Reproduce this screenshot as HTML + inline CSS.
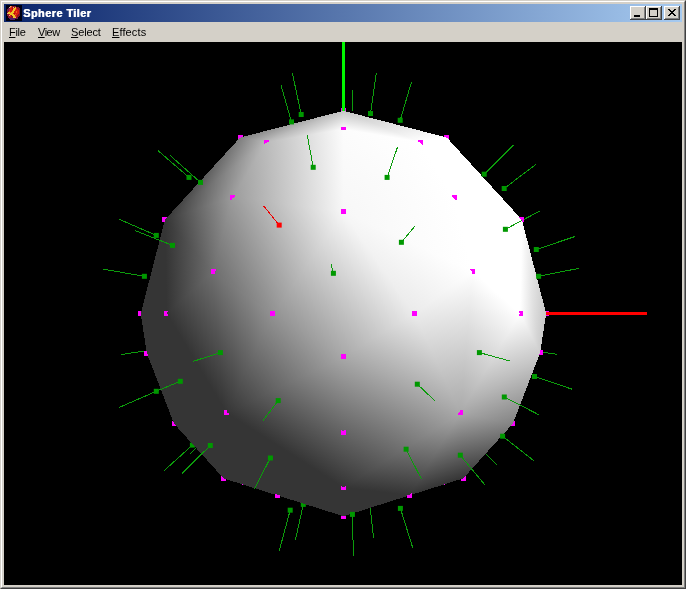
<!DOCTYPE html><html><head><meta charset="utf-8"><style>
*{margin:0;padding:0;box-sizing:border-box}
html,body{width:686px;height:589px;overflow:hidden;background:#d4d0c8;font-family:"Liberation Sans",sans-serif}
#win{position:absolute;left:0;top:0;width:686px;height:589px;background:#d4d0c8;
 border-top:1px solid #d4d0c8;border-left:1px solid #d4d0c8;border-right:1px solid #404040;border-bottom:1px solid #404040}
#win2{position:absolute;left:0;top:0;right:0;bottom:0;border-top:1px solid #fff;border-left:1px solid #fff;border-right:1px solid #808080;border-bottom:1px solid #808080}
#title{position:absolute;left:4px;top:4px;width:678px;height:18px;background:linear-gradient(to right,#0a246a,#a6caf0)}
#ttext{position:absolute;left:19px;top:3px;color:#fff;font-weight:bold;font-size:11px;line-height:12px;white-space:nowrap;letter-spacing:0.4px;will-change:transform;text-shadow:0.5px 0 0 #fff}
.btn{position:absolute;top:6px;width:16px;height:14px;background:#d4d0c8;box-shadow:inset -1px -1px #404040,inset 1px 1px #fff,inset -2px -2px #808080}
#menu{position:absolute;left:4px;top:22px;width:678px;height:20px;font-size:11px;line-height:12px;color:#000;will-change:transform}
#menu span{position:absolute;top:4px;white-space:nowrap}
#canvas{position:absolute;left:4px;top:42px;width:678px;height:543px;background:#000}
</style></head><body>
<div id="win"><div id="win2"></div></div>
<div id="title"><div id="ttext">Sphere Tiler</div></div>
<svg width="16" height="16" style="position:absolute;left:6px;top:5px" viewBox="0 0 16 16" shape-rendering="crispEdges"><path d="M0 0h1v1h-1zM1 0h1v1h-1zM2 0h1v1h-1zM3 0h1v1h-1zM4 0h1v1h-1zM5 0h1v1h-1zM6 0h1v1h-1zM7 0h1v1h-1zM8 0h1v1h-1zM9 0h1v1h-1zM10 0h1v1h-1zM11 0h1v1h-1zM12 0h1v1h-1zM13 0h1v1h-1zM14 0h1v1h-1zM15 0h1v1h-1zM0 1h1v1h-1zM1 1h1v1h-1zM2 1h1v1h-1zM3 1h1v1h-1zM10 1h1v1h-1zM11 1h1v1h-1zM12 1h1v1h-1zM13 1h1v1h-1zM14 1h1v1h-1zM15 1h1v1h-1zM0 2h1v1h-1zM1 2h1v1h-1zM2 2h1v1h-1zM13 2h1v1h-1zM14 2h1v1h-1zM15 2h1v1h-1zM0 3h1v1h-1zM1 3h1v1h-1zM14 3h1v1h-1zM15 3h1v1h-1zM0 4h1v1h-1zM14 4h1v1h-1zM15 4h1v1h-1zM0 5h1v1h-1zM14 5h1v1h-1zM15 5h1v1h-1zM0 6h1v1h-1zM14 6h1v1h-1zM15 6h1v1h-1zM0 7h1v1h-1zM14 7h1v1h-1zM15 7h1v1h-1zM0 8h1v1h-1zM14 8h1v1h-1zM15 8h1v1h-1zM0 9h1v1h-1zM14 9h1v1h-1zM15 9h1v1h-1zM0 10h1v1h-1zM14 10h1v1h-1zM15 10h1v1h-1zM0 11h1v1h-1zM1 11h1v1h-1zM13 11h1v1h-1zM14 11h1v1h-1zM15 11h1v1h-1zM0 12h1v1h-1zM1 12h1v1h-1zM12 12h1v1h-1zM13 12h1v1h-1zM14 12h1v1h-1zM15 12h1v1h-1zM0 13h1v1h-1zM1 13h1v1h-1zM2 13h1v1h-1zM12 13h1v1h-1zM13 13h1v1h-1zM14 13h1v1h-1zM15 13h1v1h-1zM0 14h1v1h-1zM1 14h1v1h-1zM2 14h1v1h-1zM3 14h1v1h-1zM9 14h1v1h-1zM10 14h1v1h-1zM11 14h1v1h-1zM12 14h1v1h-1zM13 14h1v1h-1zM14 14h1v1h-1zM15 14h1v1h-1zM0 15h1v1h-1zM1 15h1v1h-1zM2 15h1v1h-1zM3 15h1v1h-1zM4 15h1v1h-1zM5 15h1v1h-1zM6 15h1v1h-1zM7 15h1v1h-1zM8 15h1v1h-1zM9 15h1v1h-1zM10 15h1v1h-1zM11 15h1v1h-1zM12 15h1v1h-1zM13 15h1v1h-1zM14 15h1v1h-1zM15 15h1v1h-1z" fill="#000010"/><path d="M4 1h1v1h-1zM3 2h1v1h-1zM7 2h1v1h-1zM1 8h1v1h-1zM3 10h1v1h-1zM9 12h1v1h-1z" fill="#f0b090"/><path d="M5 1h1v1h-1zM4 2h1v1h-1zM7 3h1v1h-1zM9 4h1v1h-1zM6 5h1v1h-1zM3 6h1v1h-1zM10 6h1v1h-1zM4 7h1v1h-1zM10 7h1v1h-1zM9 9h1v1h-1zM9 11h1v1h-1z" fill="#f06018"/><path d="M6 1h1v1h-1zM7 1h1v1h-1zM8 1h1v1h-1zM9 1h1v1h-1zM8 2h1v1h-1zM10 2h1v1h-1zM11 2h1v1h-1zM12 2h1v1h-1zM2 3h1v1h-1zM11 3h1v1h-1zM12 3h1v1h-1zM13 3h1v1h-1zM1 4h1v1h-1zM12 4h1v1h-1zM13 4h1v1h-1zM2 5h1v1h-1zM13 5h1v1h-1zM1 6h1v1h-1zM2 6h1v1h-1zM13 6h1v1h-1zM1 7h1v1h-1zM13 7h1v1h-1zM13 8h1v1h-1zM1 9h1v1h-1zM2 9h1v1h-1zM12 9h1v1h-1zM13 9h1v1h-1zM1 10h1v1h-1zM2 10h1v1h-1zM5 10h1v1h-1zM11 10h1v1h-1zM12 10h1v1h-1zM13 10h1v1h-1zM2 11h1v1h-1zM3 11h1v1h-1zM5 11h1v1h-1zM6 11h1v1h-1zM11 11h1v1h-1zM12 11h1v1h-1zM2 12h1v1h-1zM3 12h1v1h-1zM4 12h1v1h-1zM5 12h1v1h-1zM6 12h1v1h-1zM10 12h1v1h-1zM11 12h1v1h-1zM9 13h1v1h-1zM10 13h1v1h-1z" fill="#881428"/><path d="M5 2h1v1h-1zM4 3h1v1h-1zM5 3h1v1h-1zM10 3h1v1h-1zM3 4h1v1h-1zM4 4h1v1h-1zM5 4h1v1h-1zM10 4h1v1h-1zM11 4h1v1h-1zM3 5h1v1h-1zM4 5h1v1h-1zM5 5h1v1h-1zM9 5h1v1h-1zM10 5h1v1h-1zM11 5h1v1h-1zM12 5h1v1h-1zM4 6h1v1h-1zM5 6h1v1h-1zM8 6h1v1h-1zM9 6h1v1h-1zM11 6h1v1h-1zM12 6h1v1h-1zM8 7h1v1h-1zM9 7h1v1h-1zM11 7h1v1h-1zM12 7h1v1h-1zM7 8h1v1h-1zM9 8h1v1h-1zM10 8h1v1h-1zM11 8h1v1h-1zM12 8h1v1h-1zM3 9h1v1h-1zM8 9h1v1h-1zM10 9h1v1h-1zM11 9h1v1h-1zM4 10h1v1h-1zM9 10h1v1h-1zM10 10h1v1h-1zM4 11h1v1h-1zM10 11h1v1h-1z" fill="#d81c10"/><path d="M6 2h1v1h-1zM6 3h1v1h-1zM6 4h1v1h-1zM8 8h1v1h-1z" fill="#a81410"/><path d="M9 2h1v1h-1zM8 3h1v1h-1zM9 3h1v1h-1zM7 4h1v1h-1zM8 4h1v1h-1zM7 5h1v1h-1zM8 5h1v1h-1zM6 6h1v1h-1zM7 6h1v1h-1zM2 7h1v1h-1zM3 7h1v1h-1zM5 7h1v1h-1zM6 7h1v1h-1zM7 7h1v1h-1zM2 8h1v1h-1zM3 8h1v1h-1zM4 8h1v1h-1zM5 8h1v1h-1zM6 8h1v1h-1zM4 9h1v1h-1zM5 9h1v1h-1zM6 9h1v1h-1zM7 9h1v1h-1zM6 10h1v1h-1zM7 10h1v1h-1zM8 10h1v1h-1zM7 11h1v1h-1zM8 11h1v1h-1zM7 12h1v1h-1zM8 12h1v1h-1z" fill="#f0c828"/><path d="M3 3h1v1h-1zM2 4h1v1h-1zM1 5h1v1h-1zM3 13h1v1h-1zM4 13h1v1h-1zM5 13h1v1h-1zM6 13h1v1h-1zM7 13h1v1h-1zM8 13h1v1h-1zM11 13h1v1h-1zM4 14h1v1h-1zM5 14h1v1h-1zM6 14h1v1h-1zM7 14h1v1h-1zM8 14h1v1h-1z" fill="#502068"/></svg>

<div class="btn" style="left:630px"><div style="position:absolute;left:4px;top:9px;width:6px;height:2px;background:#000"></div></div>
<div class="btn" style="left:646px"><div style="position:absolute;left:3px;top:2px;width:9px;height:9px;border:1px solid #000;border-top-width:2px"></div></div>
<div class="btn" style="left:664px"><svg width="16" height="14" style="position:absolute;left:0;top:0" shape-rendering="crispEdges"><path d="M4 3h1v1h-1zM5 3h1v1h-1zM10 3h1v1h-1zM11 3h1v1h-1zM5 4h1v1h-1zM6 4h1v1h-1zM9 4h1v1h-1zM10 4h1v1h-1zM6 5h1v1h-1zM7 5h1v1h-1zM8 5h1v1h-1zM9 5h1v1h-1zM7 6h1v1h-1zM8 6h1v1h-1zM6 7h1v1h-1zM7 7h1v1h-1zM8 7h1v1h-1zM9 7h1v1h-1zM5 8h1v1h-1zM6 8h1v1h-1zM9 8h1v1h-1zM10 8h1v1h-1zM4 9h1v1h-1zM5 9h1v1h-1zM10 9h1v1h-1zM11 9h1v1h-1z" fill="#000"/></svg></div>

<div id="menu"><span style="left:5px;letter-spacing:-0.3px"><u>F</u>ile</span><span style="left:34px;letter-spacing:-0.5px"><u>V</u>iew</span><span style="left:67px;letter-spacing:-0.15px"><u>S</u>elect</span><span style="left:108px;letter-spacing:0.12px"><u>E</u>ffects</span></div>
<div id="canvas"></div>
<svg width="686" height="589" viewBox="0 0 686 589" style="position:absolute;left:0;top:0">
<defs><clipPath id="cv"><rect x="4" y="42" width="678" height="543"/></clipPath><linearGradient id="t0" gradientUnits="userSpaceOnUse" x1="282.61" y1="325.43" x2="374.07" y2="248.00"><stop offset="0" stop-color="#929292"/><stop offset="1" stop-color="#f7f7f7"/></linearGradient>
<linearGradient id="t1" gradientUnits="userSpaceOnUse" x1="224.89" y1="411.13" x2="317.68" y2="328.02"><stop offset="0" stop-color="#353535"/><stop offset="1" stop-color="#a8a8a8"/></linearGradient>
<linearGradient id="t2" gradientUnits="userSpaceOnUse" x1="277.60" y1="444.34" x2="334.72" y2="351.39"><stop offset="0" stop-color="#353535"/><stop offset="1" stop-color="#a8a8a8"/></linearGradient>
<linearGradient id="t3" gradientUnits="userSpaceOnUse" x1="362.20" y1="441.67" x2="392.67" y2="379.69"><stop offset="0" stop-color="#646464"/><stop offset="1" stop-color="#a9a9a9"/></linearGradient>
<linearGradient id="t4" gradientUnits="userSpaceOnUse" x1="322.60" y1="333.20" x2="394.53" y2="269.64"><stop offset="0" stop-color="#a8a8a8"/><stop offset="1" stop-color="#f7f7f7"/></linearGradient>
<linearGradient id="t5" gradientUnits="userSpaceOnUse" x1="395.48" y1="382.35" x2="426.41" y2="319.49"><stop offset="0" stop-color="#a8a8a8"/><stop offset="1" stop-color="#ebebeb"/></linearGradient>
<linearGradient id="t6" gradientUnits="userSpaceOnUse" x1="222.28" y1="290.13" x2="352.22" y2="231.28"><stop offset="0" stop-color="#6f6f6f"/><stop offset="1" stop-color="#f7f7f7"/></linearGradient>
<linearGradient id="t7" gradientUnits="userSpaceOnUse" x1="195.74" y1="354.76" x2="272.79" y2="314.01"><stop offset="0" stop-color="#353535"/><stop offset="1" stop-color="#929292"/></linearGradient>
<linearGradient id="t8" gradientUnits="userSpaceOnUse" x1="184.64" y1="343.27" x2="237.79" y2="311.32"><stop offset="0" stop-color="#353535"/><stop offset="1" stop-color="#6f6f6f"/></linearGradient>
<linearGradient id="t9" gradientUnits="userSpaceOnUse" x1="165.90" y1="268.51" x2="213.72" y2="267.61"><stop offset="0" stop-color="#353535"/><stop offset="1" stop-color="#6f6f6f"/></linearGradient>
<linearGradient id="t10" gradientUnits="userSpaceOnUse" x1="205.35" y1="252.04" x2="336.09" y2="195.04"><stop offset="0" stop-color="#6f6f6f"/><stop offset="1" stop-color="#f7f7f7"/></linearGradient>
<linearGradient id="t11" gradientUnits="userSpaceOnUse" x1="167.49" y1="235.29" x2="237.09" y2="224.06"><stop offset="0" stop-color="#353535"/><stop offset="1" stop-color="#9c9c9c"/></linearGradient>
<linearGradient id="t12" gradientUnits="userSpaceOnUse" x1="388.79" y1="295.03" x2="429.08" y2="239.52"><stop offset="0" stop-color="#ebebeb"/><stop offset="1" stop-color="#ffffff"/></linearGradient>
<linearGradient id="t13" gradientUnits="userSpaceOnUse" x1="462.75" y1="412.52" x2="439.71" y2="277.04"><stop offset="0" stop-color="#a9a9a9"/><stop offset="1" stop-color="#ffffff"/></linearGradient>
<linearGradient id="t14" gradientUnits="userSpaceOnUse" x1="433.79" y1="389.25" x2="509.77" y2="304.28"><stop offset="0" stop-color="#a9a9a9"/><stop offset="1" stop-color="#ffffff"/></linearGradient>
<linearGradient id="t16" gradientUnits="userSpaceOnUse" x1="351.87" y1="245.03" x2="459.25" y2="217.62"><stop offset="0" stop-color="#f7f7f7"/><stop offset="1" stop-color="#ffffff"/></linearGradient>
<linearGradient id="t18" gradientUnits="userSpaceOnUse" x1="334.00" y1="204.12" x2="398.71" y2="124.55"><stop offset="0" stop-color="#f7f7f7"/><stop offset="1" stop-color="#ffffff"/></linearGradient>
<linearGradient id="t19" gradientUnits="userSpaceOnUse" x1="370.96" y1="115.04" x2="368.03" y2="134.07"><stop offset="0" stop-color="#c6c6c6"/><stop offset="1" stop-color="#ffffff"/></linearGradient>
<linearGradient id="t20" gradientUnits="userSpaceOnUse" x1="398.55" y1="101.28" x2="406.03" y2="144.61"><stop offset="0" stop-color="#c6c6c6"/><stop offset="1" stop-color="#ffffff"/></linearGradient>
<linearGradient id="t22" gradientUnits="userSpaceOnUse" x1="347.93" y1="219.19" x2="434.90" y2="165.92"><stop offset="0" stop-color="#f7f7f7"/><stop offset="1" stop-color="#ffffff"/></linearGradient>
<linearGradient id="t24" gradientUnits="userSpaceOnUse" x1="268.11" y1="164.67" x2="345.57" y2="159.02"><stop offset="0" stop-color="#bbbbbb"/><stop offset="1" stop-color="#fcfcfc"/></linearGradient>
<linearGradient id="t25" gradientUnits="userSpaceOnUse" x1="314.58" y1="120.37" x2="322.82" y2="138.56"><stop offset="0" stop-color="#bbbbbb"/><stop offset="1" stop-color="#fcfcfc"/></linearGradient>
<linearGradient id="t26" gradientUnits="userSpaceOnUse" x1="278.93" y1="120.32" x2="286.01" y2="136.28"><stop offset="0" stop-color="#7f7f7f"/><stop offset="1" stop-color="#c6c6c6"/></linearGradient>
<linearGradient id="t27" gradientUnits="userSpaceOnUse" x1="197.00" y1="153.51" x2="248.84" y2="178.59"><stop offset="0" stop-color="#353535"/><stop offset="1" stop-color="#bbbbbb"/></linearGradient>
<linearGradient id="t28" gradientUnits="userSpaceOnUse" x1="232.05" y1="187.09" x2="341.12" y2="179.49"><stop offset="0" stop-color="#9c9c9c"/><stop offset="1" stop-color="#f7f7f7"/></linearGradient>
<linearGradient id="t29" gradientUnits="userSpaceOnUse" x1="177.49" y1="174.26" x2="251.98" y2="194.77"><stop offset="0" stop-color="#353535"/><stop offset="1" stop-color="#bbbbbb"/></linearGradient>
<linearGradient id="t30" gradientUnits="userSpaceOnUse" x1="296.12" y1="457.33" x2="321.08" y2="418.19"><stop offset="0" stop-color="#353535"/><stop offset="1" stop-color="#646464"/></linearGradient>
<linearGradient id="t31" gradientUnits="userSpaceOnUse" x1="356.13" y1="494.17" x2="412.14" y2="387.63"><stop offset="0" stop-color="#353535"/><stop offset="1" stop-color="#a9a9a9"/></linearGradient>
<linearGradient id="t32" gradientUnits="userSpaceOnUse" x1="400.92" y1="494.37" x2="411.37" y2="407.08"><stop offset="0" stop-color="#353535"/><stop offset="1" stop-color="#a9a9a9"/></linearGradient>
<linearGradient id="t43" gradientUnits="userSpaceOnUse" x1="514.45" y1="423.02" x2="494.47" y2="370.28"><stop offset="0" stop-color="#848484"/><stop offset="1" stop-color="#cdcdcd"/></linearGradient>
<linearGradient id="t44" gradientUnits="userSpaceOnUse" x1="547.20" y1="296.05" x2="517.48" y2="294.30"><stop offset="0" stop-color="#c6c6c6"/><stop offset="1" stop-color="#ffffff"/></linearGradient>
<linearGradient id="t45" gradientUnits="userSpaceOnUse" x1="518.13" y1="393.49" x2="494.17" y2="322.20"><stop offset="0" stop-color="#a9a9a9"/><stop offset="1" stop-color="#ffffff"/></linearGradient>
<linearGradient id="t46" gradientUnits="userSpaceOnUse" x1="541.19" y1="295.66" x2="520.42" y2="295.25"><stop offset="0" stop-color="#cdcdcd"/><stop offset="1" stop-color="#ffffff"/></linearGradient>
<linearGradient id="t47" gradientUnits="userSpaceOnUse" x1="485.81" y1="473.94" x2="473.29" y2="410.37"><stop offset="0" stop-color="#353535"/><stop offset="1" stop-color="#a9a9a9"/></linearGradient>
<linearGradient id="t48" gradientUnits="userSpaceOnUse" x1="450.70" y1="482.35" x2="431.60" y2="422.02"><stop offset="0" stop-color="#353535"/><stop offset="1" stop-color="#a9a9a9"/></linearGradient></defs>
<g clip-path="url(#cv)">
<line x1="352.4" y1="111.4" x2="352.4" y2="89.9" stroke="#0c9c0c" stroke-width="1" shape-rendering="crispEdges"/>
<line x1="145" y1="351" x2="121.4" y2="354.5" stroke="#0c9c0c" stroke-width="1" shape-rendering="crispEdges"/>
<line x1="192.4" y1="445.1" x2="164.1" y2="470.7" stroke="#0c9c0c" stroke-width="1" shape-rendering="crispEdges"/>
<rect x="189.9" y="442.6" width="5" height="5" fill="#009800"/>
<line x1="190.3" y1="453.8" x2="196.2" y2="448" stroke="#0c9c0c" stroke-width="1" shape-rendering="crispEdges"/>
<line x1="303.3" y1="504.4" x2="295.4" y2="539.9" stroke="#0c9c0c" stroke-width="1" shape-rendering="crispEdges"/>
<rect x="300.8" y="501.9" width="5" height="5" fill="#009800"/>
<line x1="370.2" y1="508.4" x2="373.6" y2="538" stroke="#0c9c0c" stroke-width="1" shape-rendering="crispEdges"/>
<line x1="485.6" y1="453.5" x2="496.7" y2="464.5" stroke="#0c9c0c" stroke-width="1" shape-rendering="crispEdges"/>
<line x1="540" y1="352" x2="556.6" y2="354.2" stroke="#0c9c0c" stroke-width="1" shape-rendering="crispEdges"/>
<g shape-rendering="crispEdges"><polygon points="343.37,211.74 272.52,313.50 343.37,356.70" fill="url(#t0)"/>
<polygon points="226.52,412.95 272.52,313.50 343.37,356.70" fill="url(#t1)"/>
<polygon points="226.52,412.95 343.39,432.42 343.37,356.70" fill="url(#t2)"/>
<polygon points="460.29,412.94 343.39,432.42 343.37,356.70" fill="url(#t3)"/>
<polygon points="343.37,211.74 414.23,313.49 343.37,356.70" fill="url(#t4)"/>
<polygon points="460.29,412.94 414.23,313.49 343.37,356.70" fill="url(#t5)"/>
<polygon points="343.37,211.74 272.52,313.50 213.80,271.40" fill="url(#t6)"/>
<polygon points="226.52,412.95 272.52,313.50 213.80,271.40" fill="url(#t7)"/>
<polygon points="226.52,412.95 166.75,313.52 213.80,271.40" fill="url(#t8)"/>
<polygon points="164.98,219.71 166.75,313.52 213.80,271.40" fill="url(#t9)"/>
<polygon points="343.37,211.74 232.75,197.17 213.80,271.40" fill="url(#t10)"/>
<polygon points="164.98,219.71 232.75,197.17 213.80,271.40" fill="url(#t11)"/>
<polygon points="343.37,211.74 414.23,313.49 472.98,271.38" fill="url(#t12)"/>
<polygon points="460.29,412.94 414.23,313.49 472.98,271.38" fill="url(#t13)"/>
<polygon points="460.29,412.94 520.07,313.50 472.98,271.38" fill="url(#t14)"/>
<polygon points="521.88,219.67 520.07,313.50 472.98,271.38" fill="#ffffff"/>
<polygon points="343.37,211.74 454.03,197.15 472.98,271.38" fill="url(#t16)"/>
<polygon points="521.88,219.67 454.03,197.15 472.98,271.38" fill="#ffffff"/>
<polygon points="343.37,211.74 343.40,129.25 420.34,142.14" fill="url(#t18)"/>
<polygon points="343.43,110.79 343.40,129.25 420.34,142.14" fill="url(#t19)"/>
<polygon points="343.43,110.79 446.83,137.57 420.34,142.14" fill="url(#t20)"/>
<polygon points="521.88,219.67 446.83,137.57 420.34,142.14" fill="#ffffff"/>
<polygon points="343.37,211.74 454.03,197.15 420.34,142.14" fill="url(#t22)"/>
<polygon points="521.88,219.67 454.03,197.15 420.34,142.14" fill="#ffffff"/>
<polygon points="343.37,211.74 343.40,129.25 266.46,142.16" fill="url(#t24)"/>
<polygon points="343.43,110.79 343.40,129.25 266.46,142.16" fill="url(#t25)"/>
<polygon points="343.43,110.79 240.02,137.59 266.46,142.16" fill="url(#t26)"/>
<polygon points="164.98,219.71 240.02,137.59 266.46,142.16" fill="url(#t27)"/>
<polygon points="343.37,211.74 232.75,197.17 266.46,142.16" fill="url(#t28)"/>
<polygon points="164.98,219.71 232.75,197.17 266.46,142.16" fill="url(#t29)"/>
<polygon points="226.52,412.95 343.39,432.42 343.41,487.49" fill="url(#t30)"/>
<polygon points="460.29,412.94 343.39,432.42 343.41,487.49" fill="url(#t31)"/>
<polygon points="460.29,412.94 409.50,495.40 343.41,487.49" fill="url(#t32)"/>
<polygon points="343.46,516.26 409.50,495.40 343.41,487.49" fill="#353535"/>
<polygon points="226.52,412.95 277.36,495.40 343.41,487.49" fill="#353535"/>
<polygon points="343.46,516.26 277.36,495.40 343.41,487.49" fill="#353535"/>
<polygon points="226.52,412.95 174.01,423.64 146.79,353.02" fill="#353535"/>
<polygon points="164.98,219.71 140.74,313.54 146.79,353.02" fill="#353535"/>
<polygon points="226.52,412.95 166.75,313.52 146.79,353.02" fill="#353535"/>
<polygon points="164.98,219.71 166.75,313.52 146.79,353.02" fill="#353535"/>
<polygon points="226.52,412.95 174.01,423.64 223.67,478.40" fill="#353535"/>
<polygon points="226.52,412.95 277.36,495.40 223.67,478.40" fill="#353535"/>
<polygon points="343.46,516.26 277.36,495.40 223.67,478.40" fill="#353535"/>
<polygon points="460.29,412.94 512.87,423.62 540.08,353.00" fill="url(#t43)"/>
<polygon points="521.88,219.67 546.17,313.51 540.08,353.00" fill="url(#t44)"/>
<polygon points="460.29,412.94 520.07,313.50 540.08,353.00" fill="url(#t45)"/>
<polygon points="521.88,219.67 520.07,313.50 540.08,353.00" fill="url(#t46)"/>
<polygon points="460.29,412.94 512.87,423.62 463.23,478.39" fill="url(#t47)"/>
<polygon points="460.29,412.94 409.50,495.40 463.23,478.39" fill="url(#t48)"/>
<polygon points="343.46,516.26 409.50,495.40 463.23,478.39" fill="#353535"/></g>
<line x1="291.5" y1="121.9" x2="281" y2="85" stroke="#0c9c0c" stroke-width="1" shape-rendering="crispEdges"/>
<line x1="301.2" y1="114.5" x2="292.3" y2="72.8" stroke="#0c9c0c" stroke-width="1" shape-rendering="crispEdges"/>
<line x1="370.5" y1="113.5" x2="376.3" y2="72.8" stroke="#0c9c0c" stroke-width="1" shape-rendering="crispEdges"/>
<line x1="400.2" y1="120.3" x2="411.4" y2="82.3" stroke="#0c9c0c" stroke-width="1" shape-rendering="crispEdges"/>
<line x1="313.2" y1="167.3" x2="307.3" y2="135.2" stroke="#0c9c0c" stroke-width="1" shape-rendering="crispEdges"/>
<line x1="387.1" y1="177.4" x2="397.4" y2="147.4" stroke="#0c9c0c" stroke-width="1" shape-rendering="crispEdges"/>
<line x1="401.4" y1="242.3" x2="415" y2="226.1" stroke="#0c9c0c" stroke-width="1" shape-rendering="crispEdges"/>
<line x1="333.4" y1="273.3" x2="331" y2="264.3" stroke="#0c9c0c" stroke-width="1" shape-rendering="crispEdges"/>
<line x1="484.2" y1="174.2" x2="513.7" y2="145" stroke="#0c9c0c" stroke-width="1" shape-rendering="crispEdges"/>
<line x1="504.2" y1="188.5" x2="535.8" y2="164.4" stroke="#0c9c0c" stroke-width="1" shape-rendering="crispEdges"/>
<line x1="505.4" y1="229.3" x2="539.8" y2="211" stroke="#0c9c0c" stroke-width="1" shape-rendering="crispEdges"/>
<line x1="536.3" y1="249.5" x2="575" y2="236.5" stroke="#0c9c0c" stroke-width="1" shape-rendering="crispEdges"/>
<line x1="189" y1="177.4" x2="157.8" y2="150.5" stroke="#0c9c0c" stroke-width="1" shape-rendering="crispEdges"/>
<line x1="200.5" y1="182.4" x2="170" y2="155.3" stroke="#0c9c0c" stroke-width="1" shape-rendering="crispEdges"/>
<line x1="156.3" y1="235.4" x2="119" y2="219.2" stroke="#0c9c0c" stroke-width="1" shape-rendering="crispEdges"/>
<line x1="172.5" y1="245.4" x2="135.2" y2="230.6" stroke="#0c9c0c" stroke-width="1" shape-rendering="crispEdges"/>
<line x1="144.4" y1="276.3" x2="102.9" y2="269.1" stroke="#0c9c0c" stroke-width="1" shape-rendering="crispEdges"/>
<line x1="220.4" y1="352.6" x2="193.1" y2="361.4" stroke="#0c9c0c" stroke-width="1" shape-rendering="crispEdges"/>
<line x1="180.3" y1="381.3" x2="156.3" y2="391.3" stroke="#0c9c0c" stroke-width="1" shape-rendering="crispEdges"/>
<line x1="156.3" y1="391.3" x2="119" y2="407.5" stroke="#0c9c0c" stroke-width="1" shape-rendering="crispEdges"/>
<line x1="278.2" y1="400.6" x2="263.2" y2="420.3" stroke="#0c9c0c" stroke-width="1" shape-rendering="crispEdges"/>
<line x1="210.3" y1="445.5" x2="181.9" y2="473.6" stroke="#0c9c0c" stroke-width="1" shape-rendering="crispEdges"/>
<line x1="270.4" y1="458" x2="254.3" y2="489" stroke="#0c9c0c" stroke-width="1" shape-rendering="crispEdges"/>
<line x1="290.2" y1="510.2" x2="279.2" y2="550.9" stroke="#0c9c0c" stroke-width="1" shape-rendering="crispEdges"/>
<line x1="352.4" y1="514.4" x2="353.4" y2="555.6" stroke="#0c9c0c" stroke-width="1" shape-rendering="crispEdges"/>
<line x1="406.1" y1="449.2" x2="421.6" y2="479.4" stroke="#0c9c0c" stroke-width="1" shape-rendering="crispEdges"/>
<line x1="460.3" y1="455.2" x2="485.3" y2="485.4" stroke="#0c9c0c" stroke-width="1" shape-rendering="crispEdges"/>
<line x1="502.6" y1="436.2" x2="533.7" y2="460.6" stroke="#0c9c0c" stroke-width="1" shape-rendering="crispEdges"/>
<line x1="400.4" y1="508.4" x2="412.7" y2="547.7" stroke="#0c9c0c" stroke-width="1" shape-rendering="crispEdges"/>
<line x1="534.5" y1="376.5" x2="571.8" y2="389.1" stroke="#0c9c0c" stroke-width="1" shape-rendering="crispEdges"/>
<line x1="504.3" y1="397" x2="538.5" y2="414.6" stroke="#0c9c0c" stroke-width="1" shape-rendering="crispEdges"/>
<line x1="479.4" y1="352.6" x2="509.5" y2="360.9" stroke="#0c9c0c" stroke-width="1" shape-rendering="crispEdges"/>
<line x1="417.3" y1="384.2" x2="434.7" y2="400.6" stroke="#0c9c0c" stroke-width="1" shape-rendering="crispEdges"/>
<line x1="538.6" y1="276.3" x2="578.7" y2="268.4" stroke="#0c9c0c" stroke-width="1" shape-rendering="crispEdges"/>
<path d="M341 209h1v1h-1zM342 209h1v1h-1zM343 209h1v1h-1zM344 209h1v1h-1zM345 209h1v1h-1zM341 210h1v1h-1zM342 210h1v1h-1zM343 210h1v1h-1zM344 210h1v1h-1zM345 210h1v1h-1zM341 211h1v1h-1zM342 211h1v1h-1zM343 211h1v1h-1zM344 211h1v1h-1zM345 211h1v1h-1zM341 212h1v1h-1zM342 212h1v1h-1zM343 212h1v1h-1zM344 212h1v1h-1zM345 212h1v1h-1zM341 213h1v1h-1zM342 213h1v1h-1zM343 213h1v1h-1zM344 213h1v1h-1zM345 213h1v1h-1zM224 410h1v1h-1zM225 410h1v1h-1zM226 410h1v1h-1zM224 411h1v1h-1zM225 411h1v1h-1zM226 411h1v1h-1zM224 412h1v1h-1zM225 412h1v1h-1zM226 412h1v1h-1zM224 413h1v1h-1zM225 413h1v1h-1zM226 413h1v1h-1zM227 413h1v1h-1zM228 413h1v1h-1zM224 414h1v1h-1zM225 414h1v1h-1zM226 414h1v1h-1zM227 414h1v1h-1zM228 414h1v1h-1zM460 410h1v1h-1zM461 410h1v1h-1zM462 410h1v1h-1zM460 411h1v1h-1zM461 411h1v1h-1zM462 411h1v1h-1zM459 412h1v1h-1zM460 412h1v1h-1zM461 412h1v1h-1zM462 412h1v1h-1zM458 413h1v1h-1zM459 413h1v1h-1zM460 413h1v1h-1zM461 413h1v1h-1zM462 413h1v1h-1zM458 414h1v1h-1zM459 414h1v1h-1zM460 414h1v1h-1zM461 414h1v1h-1zM462 414h1v1h-1zM341 108h1v1h-1zM342 108h1v1h-1zM343 108h1v1h-1zM344 108h1v1h-1zM345 108h1v1h-1zM341 109h1v1h-1zM342 109h1v1h-1zM343 109h1v1h-1zM344 109h1v1h-1zM345 109h1v1h-1zM341 110h1v1h-1zM342 110h1v1h-1zM343 110h1v1h-1zM344 110h1v1h-1zM345 110h1v1h-1zM519 217h1v1h-1zM520 217h1v1h-1zM521 217h1v1h-1zM522 217h1v1h-1zM523 217h1v1h-1zM520 218h1v1h-1zM521 218h1v1h-1zM522 218h1v1h-1zM523 218h1v1h-1zM521 219h1v1h-1zM522 219h1v1h-1zM523 219h1v1h-1zM522 220h1v1h-1zM523 220h1v1h-1zM522 221h1v1h-1zM523 221h1v1h-1zM162 217h1v1h-1zM163 217h1v1h-1zM164 217h1v1h-1zM165 217h1v1h-1zM166 217h1v1h-1zM162 218h1v1h-1zM163 218h1v1h-1zM164 218h1v1h-1zM165 218h1v1h-1zM162 219h1v1h-1zM163 219h1v1h-1zM164 219h1v1h-1zM162 220h1v1h-1zM163 220h1v1h-1zM164 220h1v1h-1zM162 221h1v1h-1zM163 221h1v1h-1zM164 221h1v1h-1zM341 516h1v1h-1zM342 516h1v1h-1zM343 516h1v1h-1zM344 516h1v1h-1zM345 516h1v1h-1zM341 517h1v1h-1zM342 517h1v1h-1zM343 517h1v1h-1zM344 517h1v1h-1zM345 517h1v1h-1zM341 518h1v1h-1zM342 518h1v1h-1zM343 518h1v1h-1zM344 518h1v1h-1zM345 518h1v1h-1zM270 311h1v1h-1zM271 311h1v1h-1zM272 311h1v1h-1zM273 311h1v1h-1zM274 311h1v1h-1zM270 312h1v1h-1zM271 312h1v1h-1zM272 312h1v1h-1zM273 312h1v1h-1zM274 312h1v1h-1zM270 313h1v1h-1zM271 313h1v1h-1zM272 313h1v1h-1zM273 313h1v1h-1zM274 313h1v1h-1zM270 314h1v1h-1zM271 314h1v1h-1zM272 314h1v1h-1zM273 314h1v1h-1zM274 314h1v1h-1zM270 315h1v1h-1zM271 315h1v1h-1zM272 315h1v1h-1zM273 315h1v1h-1zM274 315h1v1h-1zM412 311h1v1h-1zM413 311h1v1h-1zM414 311h1v1h-1zM415 311h1v1h-1zM416 311h1v1h-1zM412 312h1v1h-1zM413 312h1v1h-1zM414 312h1v1h-1zM415 312h1v1h-1zM416 312h1v1h-1zM412 313h1v1h-1zM413 313h1v1h-1zM414 313h1v1h-1zM415 313h1v1h-1zM416 313h1v1h-1zM412 314h1v1h-1zM413 314h1v1h-1zM414 314h1v1h-1zM415 314h1v1h-1zM416 314h1v1h-1zM412 315h1v1h-1zM413 315h1v1h-1zM414 315h1v1h-1zM415 315h1v1h-1zM416 315h1v1h-1zM341 127h1v1h-1zM342 127h1v1h-1zM343 127h1v1h-1zM344 127h1v1h-1zM345 127h1v1h-1zM341 128h1v1h-1zM342 128h1v1h-1zM343 128h1v1h-1zM344 128h1v1h-1zM345 128h1v1h-1zM341 129h1v1h-1zM342 129h1v1h-1zM343 129h1v1h-1zM344 129h1v1h-1zM345 129h1v1h-1zM452 195h1v1h-1zM453 195h1v1h-1zM454 195h1v1h-1zM455 195h1v1h-1zM456 195h1v1h-1zM452 196h1v1h-1zM453 196h1v1h-1zM454 196h1v1h-1zM455 196h1v1h-1zM456 196h1v1h-1zM453 197h1v1h-1zM454 197h1v1h-1zM455 197h1v1h-1zM456 197h1v1h-1zM454 198h1v1h-1zM455 198h1v1h-1zM456 198h1v1h-1zM455 199h1v1h-1zM456 199h1v1h-1zM230 195h1v1h-1zM231 195h1v1h-1zM232 195h1v1h-1zM233 195h1v1h-1zM234 195h1v1h-1zM230 196h1v1h-1zM231 196h1v1h-1zM232 196h1v1h-1zM233 196h1v1h-1zM234 196h1v1h-1zM230 197h1v1h-1zM231 197h1v1h-1zM232 197h1v1h-1zM233 197h1v1h-1zM230 198h1v1h-1zM231 198h1v1h-1zM230 199h1v1h-1zM231 199h1v1h-1zM341 430h1v1h-1zM344 430h1v1h-1zM345 430h1v1h-1zM341 431h1v1h-1zM342 431h1v1h-1zM343 431h1v1h-1zM344 431h1v1h-1zM345 431h1v1h-1zM341 432h1v1h-1zM342 432h1v1h-1zM343 432h1v1h-1zM344 432h1v1h-1zM345 432h1v1h-1zM341 433h1v1h-1zM342 433h1v1h-1zM343 433h1v1h-1zM344 433h1v1h-1zM345 433h1v1h-1zM341 434h1v1h-1zM342 434h1v1h-1zM343 434h1v1h-1zM344 434h1v1h-1zM345 434h1v1h-1zM172 421h1v1h-1zM172 422h1v1h-1zM173 422h1v1h-1zM172 423h1v1h-1zM173 423h1v1h-1zM172 424h1v1h-1zM173 424h1v1h-1zM174 424h1v1h-1zM172 425h1v1h-1zM173 425h1v1h-1zM174 425h1v1h-1zM175 425h1v1h-1zM164 311h1v1h-1zM165 311h1v1h-1zM166 311h1v1h-1zM167 311h1v1h-1zM164 312h1v1h-1zM165 312h1v1h-1zM166 312h1v1h-1zM164 313h1v1h-1zM165 313h1v1h-1zM166 313h1v1h-1zM164 314h1v1h-1zM165 314h1v1h-1zM166 314h1v1h-1zM167 314h1v1h-1zM164 315h1v1h-1zM165 315h1v1h-1zM166 315h1v1h-1zM167 315h1v1h-1zM275 494h1v1h-1zM276 494h1v1h-1zM275 495h1v1h-1zM276 495h1v1h-1zM277 495h1v1h-1zM278 495h1v1h-1zM279 495h1v1h-1zM275 496h1v1h-1zM276 496h1v1h-1zM277 496h1v1h-1zM278 496h1v1h-1zM279 496h1v1h-1zM275 497h1v1h-1zM276 497h1v1h-1zM277 497h1v1h-1zM278 497h1v1h-1zM279 497h1v1h-1zM514 421h1v1h-1zM513 422h1v1h-1zM514 422h1v1h-1zM513 423h1v1h-1zM514 423h1v1h-1zM512 424h1v1h-1zM513 424h1v1h-1zM514 424h1v1h-1zM511 425h1v1h-1zM512 425h1v1h-1zM513 425h1v1h-1zM514 425h1v1h-1zM519 311h1v1h-1zM520 311h1v1h-1zM521 311h1v1h-1zM522 311h1v1h-1zM519 312h1v1h-1zM520 312h1v1h-1zM521 312h1v1h-1zM522 312h1v1h-1zM520 313h1v1h-1zM521 313h1v1h-1zM522 313h1v1h-1zM519 314h1v1h-1zM520 314h1v1h-1zM521 314h1v1h-1zM522 314h1v1h-1zM519 315h1v1h-1zM520 315h1v1h-1zM521 315h1v1h-1zM522 315h1v1h-1zM411 493h1v1h-1zM410 494h1v1h-1zM411 494h1v1h-1zM407 495h1v1h-1zM408 495h1v1h-1zM409 495h1v1h-1zM410 495h1v1h-1zM411 495h1v1h-1zM407 496h1v1h-1zM408 496h1v1h-1zM409 496h1v1h-1zM410 496h1v1h-1zM411 496h1v1h-1zM407 497h1v1h-1zM408 497h1v1h-1zM409 497h1v1h-1zM410 497h1v1h-1zM411 497h1v1h-1zM138 311h1v1h-1zM139 311h1v1h-1zM140 311h1v1h-1zM138 312h1v1h-1zM139 312h1v1h-1zM140 312h1v1h-1zM138 313h1v1h-1zM139 313h1v1h-1zM140 313h1v1h-1zM138 314h1v1h-1zM139 314h1v1h-1zM140 314h1v1h-1zM138 315h1v1h-1zM139 315h1v1h-1zM140 315h1v1h-1zM242 484h1v1h-1zM546 311h1v1h-1zM547 311h1v1h-1zM548 311h1v1h-1zM546 312h1v1h-1zM547 312h1v1h-1zM548 312h1v1h-1zM546 313h1v1h-1zM547 313h1v1h-1zM548 313h1v1h-1zM546 314h1v1h-1zM547 314h1v1h-1zM548 314h1v1h-1zM546 315h1v1h-1zM547 315h1v1h-1zM548 315h1v1h-1zM444 484h1v1h-1zM444 135h1v1h-1zM445 135h1v1h-1zM446 135h1v1h-1zM447 135h1v1h-1zM448 135h1v1h-1zM444 136h1v1h-1zM445 136h1v1h-1zM446 136h1v1h-1zM447 136h1v1h-1zM448 136h1v1h-1zM446 137h1v1h-1zM447 137h1v1h-1zM448 137h1v1h-1zM448 138h1v1h-1zM238 135h1v1h-1zM239 135h1v1h-1zM240 135h1v1h-1zM241 135h1v1h-1zM242 135h1v1h-1zM238 136h1v1h-1zM239 136h1v1h-1zM240 136h1v1h-1zM241 136h1v1h-1zM242 136h1v1h-1zM238 137h1v1h-1zM239 137h1v1h-1zM240 137h1v1h-1zM238 138h1v1h-1zM341 354h1v1h-1zM342 354h1v1h-1zM343 354h1v1h-1zM344 354h1v1h-1zM345 354h1v1h-1zM341 355h1v1h-1zM342 355h1v1h-1zM343 355h1v1h-1zM344 355h1v1h-1zM345 355h1v1h-1zM341 356h1v1h-1zM342 356h1v1h-1zM343 356h1v1h-1zM344 356h1v1h-1zM345 356h1v1h-1zM341 357h1v1h-1zM342 357h1v1h-1zM343 357h1v1h-1zM344 357h1v1h-1zM345 357h1v1h-1zM341 358h1v1h-1zM342 358h1v1h-1zM343 358h1v1h-1zM344 358h1v1h-1zM345 358h1v1h-1zM211 269h1v1h-1zM212 269h1v1h-1zM213 269h1v1h-1zM214 269h1v1h-1zM215 269h1v1h-1zM211 270h1v1h-1zM212 270h1v1h-1zM213 270h1v1h-1zM214 270h1v1h-1zM215 270h1v1h-1zM211 271h1v1h-1zM212 271h1v1h-1zM213 271h1v1h-1zM214 271h1v1h-1zM211 272h1v1h-1zM212 272h1v1h-1zM213 272h1v1h-1zM214 272h1v1h-1zM211 273h1v1h-1zM212 273h1v1h-1zM213 273h1v1h-1zM214 273h1v1h-1zM470 269h1v1h-1zM471 269h1v1h-1zM472 269h1v1h-1zM473 269h1v1h-1zM474 269h1v1h-1zM471 270h1v1h-1zM472 270h1v1h-1zM473 270h1v1h-1zM474 270h1v1h-1zM472 271h1v1h-1zM473 271h1v1h-1zM474 271h1v1h-1zM472 272h1v1h-1zM473 272h1v1h-1zM474 272h1v1h-1zM472 273h1v1h-1zM473 273h1v1h-1zM474 273h1v1h-1zM418 140h1v1h-1zM419 140h1v1h-1zM420 140h1v1h-1zM421 140h1v1h-1zM422 140h1v1h-1zM418 141h1v1h-1zM419 141h1v1h-1zM420 141h1v1h-1zM421 141h1v1h-1zM422 141h1v1h-1zM420 142h1v1h-1zM421 142h1v1h-1zM422 142h1v1h-1zM421 143h1v1h-1zM422 143h1v1h-1zM422 144h1v1h-1zM264 140h1v1h-1zM265 140h1v1h-1zM266 140h1v1h-1zM267 140h1v1h-1zM268 140h1v1h-1zM264 141h1v1h-1zM265 141h1v1h-1zM266 141h1v1h-1zM267 141h1v1h-1zM268 141h1v1h-1zM264 142h1v1h-1zM265 142h1v1h-1zM266 142h1v1h-1zM264 143h1v1h-1zM341 486h1v1h-1zM345 486h1v1h-1zM341 487h1v1h-1zM342 487h1v1h-1zM343 487h1v1h-1zM344 487h1v1h-1zM345 487h1v1h-1zM341 488h1v1h-1zM342 488h1v1h-1zM343 488h1v1h-1zM344 488h1v1h-1zM345 488h1v1h-1zM341 489h1v1h-1zM342 489h1v1h-1zM343 489h1v1h-1zM344 489h1v1h-1zM345 489h1v1h-1zM144 351h1v1h-1zM145 351h1v1h-1zM146 351h1v1h-1zM144 352h1v1h-1zM145 352h1v1h-1zM146 352h1v1h-1zM144 353h1v1h-1zM145 353h1v1h-1zM146 353h1v1h-1zM144 354h1v1h-1zM145 354h1v1h-1zM146 354h1v1h-1zM147 354h1v1h-1zM144 355h1v1h-1zM145 355h1v1h-1zM146 355h1v1h-1zM147 355h1v1h-1zM221 476h1v1h-1zM221 477h1v1h-1zM222 477h1v1h-1zM221 478h1v1h-1zM222 478h1v1h-1zM223 478h1v1h-1zM221 479h1v1h-1zM222 479h1v1h-1zM223 479h1v1h-1zM224 479h1v1h-1zM225 479h1v1h-1zM221 480h1v1h-1zM222 480h1v1h-1zM223 480h1v1h-1zM224 480h1v1h-1zM225 480h1v1h-1zM540 350h1v1h-1zM541 350h1v1h-1zM542 350h1v1h-1zM540 351h1v1h-1zM541 351h1v1h-1zM542 351h1v1h-1zM540 352h1v1h-1zM541 352h1v1h-1zM542 352h1v1h-1zM540 353h1v1h-1zM541 353h1v1h-1zM542 353h1v1h-1zM539 354h1v1h-1zM540 354h1v1h-1zM541 354h1v1h-1zM542 354h1v1h-1zM465 476h1v1h-1zM464 477h1v1h-1zM465 477h1v1h-1zM463 478h1v1h-1zM464 478h1v1h-1zM465 478h1v1h-1zM461 479h1v1h-1zM462 479h1v1h-1zM463 479h1v1h-1zM464 479h1v1h-1zM465 479h1v1h-1zM461 480h1v1h-1zM462 480h1v1h-1zM463 480h1v1h-1zM464 480h1v1h-1zM465 480h1v1h-1z" fill="#ff00ff" shape-rendering="crispEdges"/>
<rect x="342" y="42" width="3" height="69" fill="#00f800"/><rect x="546" y="312" width="101" height="3" fill="#ff0000"/>
<rect x="289.0" y="119.4" width="5" height="5" fill="#009800"/>
<rect x="298.7" y="112.0" width="5" height="5" fill="#009800"/>
<rect x="368.0" y="111.0" width="5" height="5" fill="#009800"/>
<rect x="397.7" y="117.8" width="5" height="5" fill="#009800"/>
<rect x="310.7" y="164.8" width="5" height="5" fill="#009800"/>
<rect x="384.6" y="174.9" width="5" height="5" fill="#009800"/>
<rect x="398.9" y="239.8" width="5" height="5" fill="#009800"/>
<rect x="330.9" y="270.8" width="5" height="5" fill="#009800"/>
<rect x="481.7" y="171.7" width="5" height="5" fill="#009800"/>
<rect x="501.7" y="186.0" width="5" height="5" fill="#009800"/>
<rect x="502.9" y="226.8" width="5" height="5" fill="#009800"/>
<rect x="533.8" y="247.0" width="5" height="5" fill="#009800"/>
<rect x="186.5" y="174.9" width="5" height="5" fill="#009800"/>
<rect x="198.0" y="179.9" width="5" height="5" fill="#009800"/>
<rect x="153.8" y="232.9" width="5" height="5" fill="#009800"/>
<rect x="170.0" y="242.9" width="5" height="5" fill="#009800"/>
<rect x="141.9" y="273.8" width="5" height="5" fill="#009800"/>
<rect x="217.9" y="350.1" width="5" height="5" fill="#009800"/>
<rect x="177.8" y="378.8" width="5" height="5" fill="#009800"/>
<rect x="153.8" y="388.8" width="5" height="5" fill="#009800"/>
<rect x="275.7" y="398.1" width="5" height="5" fill="#009800"/>
<rect x="207.8" y="443.0" width="5" height="5" fill="#009800"/>
<rect x="267.9" y="455.5" width="5" height="5" fill="#009800"/>
<rect x="287.7" y="507.7" width="5" height="5" fill="#009800"/>
<rect x="349.9" y="511.9" width="5" height="5" fill="#009800"/>
<rect x="403.6" y="446.7" width="5" height="5" fill="#009800"/>
<rect x="457.8" y="452.7" width="5" height="5" fill="#009800"/>
<rect x="500.1" y="433.7" width="5" height="5" fill="#009800"/>
<rect x="397.9" y="505.9" width="5" height="5" fill="#009800"/>
<rect x="532.0" y="374.0" width="5" height="5" fill="#009800"/>
<rect x="501.8" y="394.5" width="5" height="5" fill="#009800"/>
<rect x="476.9" y="350.1" width="5" height="5" fill="#009800"/>
<rect x="414.8" y="381.7" width="5" height="5" fill="#009800"/>
<rect x="536.1" y="273.8" width="5" height="5" fill="#009800"/>
<line x1="279.2" y1="225.1" x2="263.8" y2="206.1" stroke="#f00000" stroke-width="1" shape-rendering="crispEdges"/>
<rect x="276.7" y="222.6" width="5" height="5" fill="#ff0000"/>
</g></svg>
</body></html>
